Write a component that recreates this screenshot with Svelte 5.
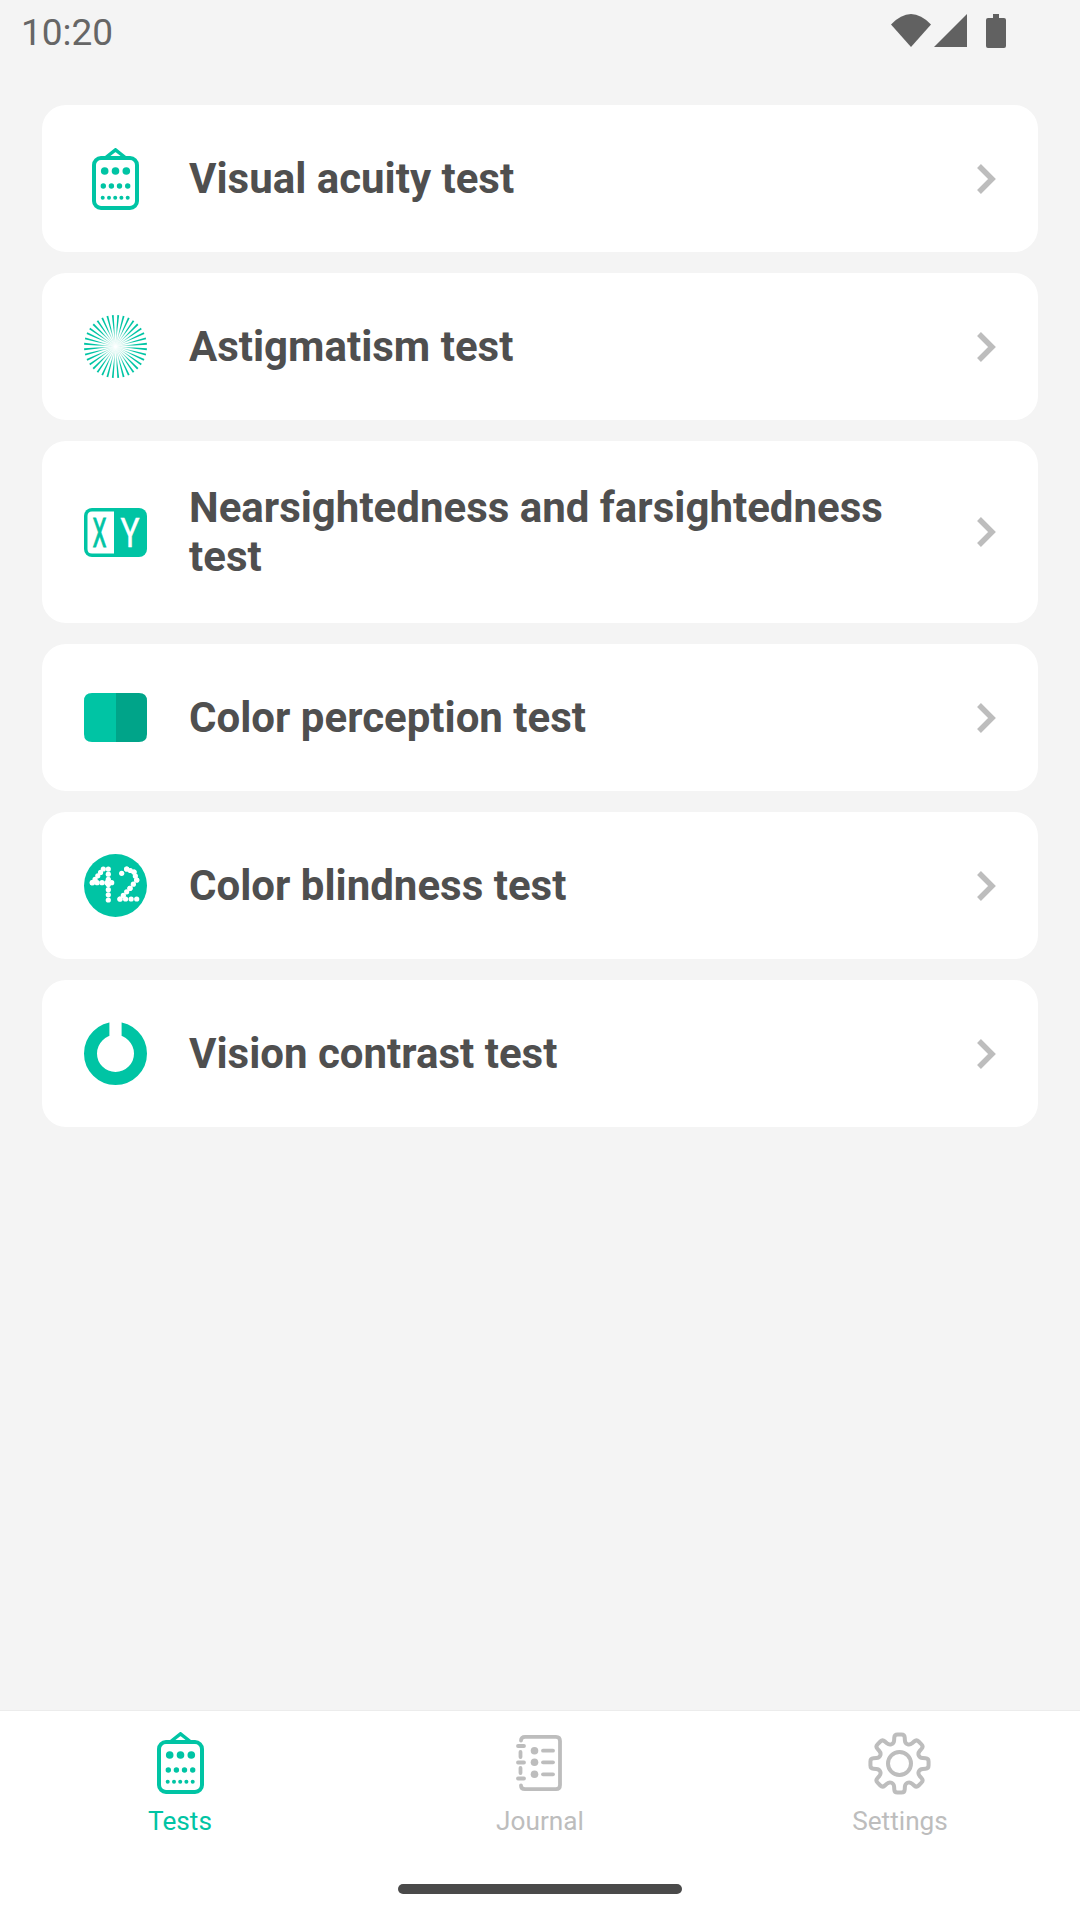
<script lang="ts">
	type Test = { id: string; label: string };

	const tests: Test[] = [
		{ id: 'acuity', label: 'Visual acuity test' },
		{ id: 'astig', label: 'Astigmatism test' },
		{ id: 'xy', label: 'Nearsightedness and farsightedness test' },
		{ id: 'color', label: 'Color perception test' },
		{ id: 'blind', label: 'Color blindness test' },
		{ id: 'contrast', label: 'Vision contrast test' }
	];

	// sunburst rays, thin at the centre and wider at the rim
	const rays = Array.from({ length: 36 }, (_, i) => {
		const a = ((i + 0.5) * Math.PI * 2) / 36;
		const w = 0.029;
		const p = (ang: number, r: number) =>
			`${(31.5 + Math.cos(ang) * r).toFixed(2)},${(31.5 + Math.sin(ang) * r).toFixed(2)}`;
		return `${p(a, 1)} ${p(a - w, 31.5)} ${p(a + w, 31.5)}`;
	});

	// dots along a polyline, for the 42 plate
	function dotted(points: number[][], step = 4.8) {
		const out: number[][] = [];
		for (let i = 0; i < points.length - 1; i++) {
			const [x1, y1] = points[i];
			const [x2, y2] = points[i + 1];
			const n = Math.max(1, Math.round(Math.hypot(x2 - x1, y2 - y1) / step));
			for (let k = 0; k <= n; k++) {
				out.push([x1 + ((x2 - x1) * k) / n, y1 + ((y2 - y1) * k) / n]);
			}
		}
		return out;
	}

	const plateDots = [
		...dotted([[24.3, 15], [24.3, 46]]),
		...dotted([[19.3, 15], [8.3, 28.7], [27.7, 28.7]]),
		...dotted([[37.7, 19.3], [42.7, 15], [50, 18], [52.7, 26], [46, 34.3], [36, 45], [52.7, 45]])
	];

	// gear outline: polygon points joined with small rounded corners
	function gearPath() {
		const pts: number[][] = [];
		for (let i = 0; i < 8; i++) {
			const a = (i * Math.PI) / 4 - Math.PI / 2;
			const p = (ang: number, r: number) => [31.5 + Math.cos(ang) * r, 31.5 + Math.sin(ang) * r];
			pts.push(p(a - 0.27, 21), p(a - 0.17, 29.5), p(a + 0.17, 29.5), p(a + 0.27, 21));
		}
		let d = '';
		pts.forEach((pt, i) => {
			const prev = pts[(i + pts.length - 1) % pts.length];
			const next = pts[(i + 1) % pts.length];
			const toward = (from: number[], to: number[], dist: number) => {
				const len = Math.hypot(to[0] - from[0], to[1] - from[1]);
				const t = Math.min(dist / len, 0.5);
				return [from[0] + (to[0] - from[0]) * t, from[1] + (to[1] - from[1]) * t];
			};
			const a = toward(pt, prev, 3);
			const b = toward(pt, next, 3);
			d += `${i === 0 ? 'M' : 'L'}${a[0].toFixed(2)} ${a[1].toFixed(2)} Q${pt[0].toFixed(2)} ${pt[1].toFixed(2)} ${b[0].toFixed(2)} ${b[1].toFixed(2)} `;
		});
		return d + 'Z';
	}
	const gear = gearPath();

	const bigDots = [12.7, 23.5, 34.3];
	const midDots = [11.3, 19.4, 27.5, 35.7];
	const smallDots = [10.7, 17, 23.2, 29.4, 35.7];
	const journalRows = [15.7, 27.3, 39.3];
</script>

{#snippet clipboard()}
	<svg class="clip" width="47" height="62" viewBox="0 0 47 62">
		<rect x="2" y="10" width="43" height="50" rx="7" fill="none" stroke="currentColor" stroke-width="4" />
		<path d="M12.5 10.5 L23.5 1.8 L34.5 10.5" fill="none" stroke="currentColor" stroke-width="3.4" />
		{#each bigDots as x}<circle cx={x} cy="23" r="3.8" fill="currentColor" />{/each}
		{#each midDots as x}<circle cx={x} cy="38" r="2.7" fill="currentColor" />{/each}
		{#each smallDots as x}<circle cx={x} cy="49.7" r="2" fill="currentColor" />{/each}
	</svg>
{/snippet}

<div class="screen">
	<header class="status">
		<span class="time">10:20</span>
		<div class="status-icons">
			<svg width="40" height="33" viewBox="0 0 40 33"><path d="M0 10.5 Q20 -10.5 40 10.5 L20 33 Z" /></svg>
			<svg width="33" height="33" viewBox="0 0 33 33"><path d="M0 33 L33 0 V33 Z" /></svg>
			<svg class="battery" width="20" height="34" viewBox="0 0 20 34"><path d="M7 0 H13 V4 H18 Q20 4 20 6 V32 Q20 34 18 34 H2 Q0 34 0 32 V6 Q0 4 2 4 H7 Z" /></svg>
		</div>
	</header>

	<main class="list">
		{#each tests as test}
			<div class="card">
				<div class="card-icon">
					{#if test.id === 'acuity'}
						{@render clipboard()}
					{:else if test.id === 'astig'}
						<svg width="63" height="63" viewBox="0 0 63 63">
							<defs>
								<radialGradient id="burst" gradientUnits="userSpaceOnUse" cx="31.5" cy="31.5" r="31.5">
									<stop offset="0" stop-color="#d8f5ef" />
									<stop offset="0.3" stop-color="#9be6d8" />
									<stop offset="0.6" stop-color="#00c4a4" />
								</radialGradient>
							</defs>
							{#each rays as r}<polygon points={r} fill="url(#burst)" />{/each}
						</svg>
					{:else if test.id === 'xy'}
						<svg width="63" height="49" viewBox="0 0 63 49">
							<rect width="63" height="49" rx="8" fill="#00c4a4" />
							<path d="M8 3.5 H30 V45.5 H8 Q3.5 45.5 3.5 41 V8 Q3.5 3.5 8 3.5 Z" fill="#fff" />
							<text x="8.5" y="38.5" class="glyph" fill="#00c4a4" stroke="#00c4a4" stroke-width="0.9" textLength="14" lengthAdjust="spacingAndGlyphs">X</text>
							<text x="36.5" y="38.5" class="glyph" fill="#fff" stroke="#fff" stroke-width="0.5" textLength="19" lengthAdjust="spacingAndGlyphs">Y</text>
						</svg>
					{:else if test.id === 'color'}
						<svg width="63" height="49" viewBox="0 0 63 49">
							<path d="M8 0 H32 V49 H8 Q0 49 0 41 V8 Q0 0 8 0 Z" fill="#00c4a4" />
							<path d="M32 0 H55 Q63 0 63 8 V41 Q63 49 55 49 H32 Z" fill="#00a489" />
						</svg>
					{:else if test.id === 'blind'}
						<svg width="63" height="63" viewBox="0 0 63 63">
							<circle cx="31.5" cy="31.5" r="31.5" fill="#00c4a4" />
							{#each plateDots as d}<circle cx={d[0]} cy={d[1]} r="2.6" fill="#fff" />{/each}
						</svg>
					{:else}
						<svg width="63" height="63" viewBox="0 0 63 63">
							<circle cx="31.5" cy="31.5" r="25" fill="none" stroke="#00c4a4" stroke-width="13" />
							<rect x="25.4" y="0" width="12.2" height="14" fill="#fff" />
						</svg>
					{/if}
				</div>
				<span class="card-label">{test.label}</span>
				<svg class="chevron" width="20" height="32" viewBox="0 0 20 32">
					<path d="M3 3 L16 16 L3 29" fill="none" stroke="#bdbdbd" stroke-width="5.5" />
				</svg>
			</div>
		{/each}
	</main>

	<nav class="tabs">
		<div class="tab-row">
			<div class="tab active">
				<div class="tab-icon">{@render clipboard()}</div>
				<span>Tests</span>
			</div>
			<div class="tab">
				<div class="tab-icon">
					<svg width="48" height="56" viewBox="0 0 48 56" fill="none" stroke="#bdbdbd" stroke-width="3.8" stroke-linecap="round">
						<path d="M5 5.5 Q5 1.9 9 1.9 H40 Q44 1.9 44 6 V50 Q44 54.1 40 54.1 H9 Q5 54.1 5 50.5" />
						<path d="M2 11 H8 M2 27.5 H8 M2 43.5 H8 M4.5 17 V22 M4.5 33 V38" />
						{#each journalRows as y}
							<circle cx="18.5" cy={y} r="3.8" fill="#bdbdbd" stroke="none" />
							<path d="M27 {y} H37" />
						{/each}
					</svg>
				</div>
				<span>Journal</span>
			</div>
			<div class="tab">
				<div class="tab-icon">
					<svg width="65" height="63" viewBox="0 0 65 63" fill="none" stroke="#bdbdbd" stroke-width="4" stroke-linejoin="round">
						<path d={gear} />
						<circle cx="31.5" cy="31.5" r="11.5" />
					</svg>
				</div>
				<span>Settings</span>
			</div>
		</div>
		<div class="home-bar"></div>
	</nav>
</div>

<style>
	:global(body) {
		margin: 0;
		background: #f4f4f4;
	}

	.screen {
		display: flex;
		flex-direction: column;
		width: 1080px;
		height: 1920px;
		background: #f4f4f4;
		font-family: Roboto, 'Liberation Sans', sans-serif;
		overflow: hidden;
	}

	.status {
		display: flex;
		justify-content: space-between;
		align-items: flex-start;
		height: 105px;
		box-sizing: border-box;
		padding: 14px 74px 0 21px;
		flex-shrink: 0;
	}

	.time {
		font-size: 37px;
		line-height: 36px;
		margin-top: 1px;
		color: #666;
	}

	.status-icons {
		display: flex;
		align-items: flex-start;
		gap: 3px;
	}

	.status-icons svg {
		fill: #616161;
		display: block;
	}

	.battery {
		margin-left: 16px;
	}

	.list {
		display: flex;
		flex-direction: column;
		gap: 21px;
		padding: 0 42px;
		flex: 1;
	}

	.card {
		display: flex;
		align-items: center;
		min-height: 147px;
		box-sizing: border-box;
		padding: 42px;
		background: #fff;
		border-radius: 24px;
	}

	.card-icon {
		display: flex;
		justify-content: center;
		align-items: center;
		width: 63px;
		flex-shrink: 0;
		margin-right: 42px;
		color: #00c4a4;
	}

	.card-icon svg {
		display: block;
	}

	.card-label {
		flex: 1;
		font-size: 42px;
		line-height: 49px;
		font-weight: 700;
		color: #4f4f4f;
	}

	.chevron {
		flex-shrink: 0;
		margin: 0 0 0 40px;
	}

	.glyph {
		font-family: Roboto, sans-serif;
		font-size: 40px;
	}

	.tabs {
		flex-shrink: 0;
		height: 210px;
		box-sizing: border-box;
		padding-top: 20px;
		background: #fff;
		border-top: 1px solid #ececec;
		display: flex;
		flex-direction: column;
		align-items: center;
	}

	.tab-row {
		display: grid;
		grid-template-columns: repeat(3, 1fr);
		width: 100%;
	}

	.tab {
		display: flex;
		flex-direction: column;
		align-items: center;
		font-size: 26.2px;
		line-height: 30px;
		color: #bdbdbd;
	}

	.tab.active {
		color: #00c4a4;
	}

	.tab-icon {
		display: flex;
		align-items: center;
		justify-content: center;
		height: 64px;
		margin-bottom: 11px;
	}

	.tab-icon svg {
		display: block;
	}

	.home-bar {
		width: 284px;
		height: 10px;
		border-radius: 5px;
		background: #4a4a4a;
		margin-top: 48px;
	}
</style>
